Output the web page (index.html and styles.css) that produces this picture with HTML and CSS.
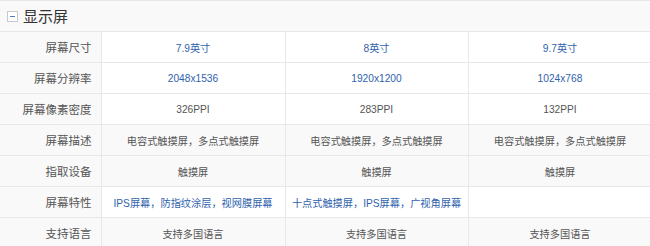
FILE: index.html
```html
<!DOCTYPE html>
<html lang="zh">
<head>
<meta charset="utf-8">
<link rel="stylesheet" href="styles.css">
</head>
<body>
<div class="panel">
  <div class="head">
    <span class="toggle"><span class="bar"></span></span>
    <span class="title">显示屏</span>
  </div>
  <table class="spec">
    <colgroup><col class="c0"><col class="c1"><col class="c2"><col class="c3"></colgroup>
    <tr class="w"><th>屏幕尺寸</th><td class="blue">7.9英寸</td><td class="blue">8英寸</td><td class="blue">9.7英寸</td></tr>
    <tr class="w"><th>屏幕分辨率</th><td class="blue">2048x1536</td><td class="blue">1920x1200</td><td class="blue">1024x768</td></tr>
    <tr class="w"><th>屏幕像素密度</th><td>326PPI</td><td>283PPI</td><td>132PPI</td></tr>
    <tr class="g"><th>屏幕描述</th><td>电容式触摸屏，多点式触摸屏</td><td>电容式触摸屏，多点式触摸屏</td><td>电容式触摸屏，多点式触摸屏</td></tr>
    <tr class="g"><th>指取设备</th><td>触摸屏</td><td>触摸屏</td><td>触摸屏</td></tr>
    <tr class="w"><th>屏幕特性</th><td class="blue">IPS屏幕，防指纹涂层，视网膜屏幕</td><td class="blue">十点式触摸屏，IPS屏幕，广视角屏幕</td><td></td></tr>
    <tr class="g"><th>支持语言</th><td>支持多国语言</td><td>支持多国语言</td><td>支持多国语言</td></tr>
  </table>
</div>
</body>
</html>
```
FILE: styles.css
```css
html, body { margin: 0; padding: 0; background: #fff; }
body { font-family: "Liberation Sans", "Noto Sans CJK SC", sans-serif; color: #555; }
.panel { width: 651px; overflow: hidden; }
.head {
  height: 30px;
  border-top: 1px solid #e6e6e6;
  border-bottom: 1px solid #e6e6e6;
  background: #f9f9f9;
  display: flex;
  align-items: center;
  padding-left: 7px;
  gap: 5px;
}
.toggle {
  width: 9px; height: 9px;
  border: 1px solid #c9c9c9;
  background: #fff;
  display: flex; align-items: center; justify-content: center;
}
.toggle .bar { width: 5px; height: 1px; background: #4a7fc4; }
.title { font-size: 15px; color: #333; line-height: 1; }
.spec { border-collapse: collapse; table-layout: fixed; width: 652px; }
.c0 { width: 101px; } .c1 { width: 184px; } .c2 { width: 183px; } .c3 { width: 184px; }
.spec th, .spec td {
  height: 30px;
  padding: 0;
  border: 1px solid #e8e8e8;
  border-top: 0;
  vertical-align: middle;
}
.spec th {
  text-align: right;
  padding-right: 9px;
  font-weight: normal;
  font-size: 11.5px;
  color: #555;
  background: #f9f9f9;
  border-left: 0;
}
.spec td { text-align: center; font-size: 10.2px; color: #555; }
.spec tr.g td { background: #f9f9f9; }
.spec td.blue { color: #2f62ad; }
```
